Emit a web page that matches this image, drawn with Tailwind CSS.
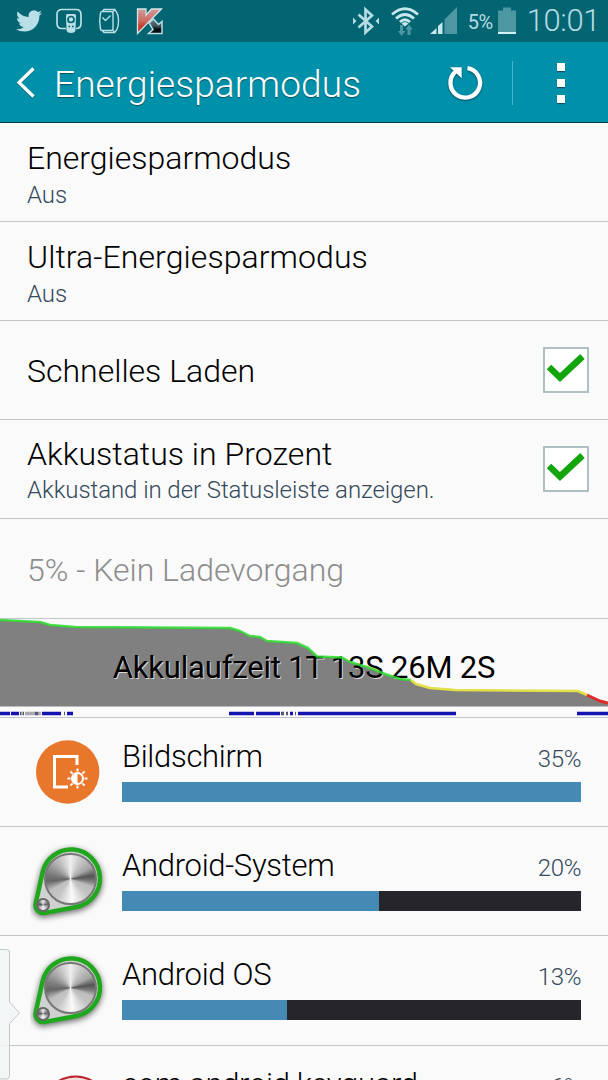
<!DOCTYPE html>
<html lang="de">
<head>
  <meta charset="UTF-8" />
  <title>Energiesparmodus</title>
  <script src="https://cdn.jsdelivr.net/npm/@tailwindcss/browser@4"></script>
</head>
<body class="bg-[#fafafa] font-[Roboto,sans-serif] font-light text-black">
  <div class="relative w-[608px] h-[1080px] overflow-hidden">

    <!-- Status bar -->
    <div class="h-[42px] bg-[#036472] flex items-center justify-between pl-4 pr-[8px] text-[#b5dce2]">
      <div class="flex items-center">
        <svg class="w-[26px] h-[26px]" viewBox="0 0 24 24" fill="#b9e0e6">
          <path d="M23.953 4.57a10 10 0 01-2.825.775 4.958 4.958 0 002.163-2.723c-.951.555-2.005.959-3.127 1.184a4.92 4.92 0 00-8.384 4.482C7.69 8.095 4.067 6.13 1.64 3.162a4.822 4.822 0 00-.666 2.475c0 1.71.87 3.213 2.188 4.096a4.904 4.904 0 01-2.228-.616v.06a4.923 4.923 0 003.946 4.827 4.996 4.996 0 01-2.212.085 4.936 4.936 0 004.604 3.417 9.867 9.867 0 01-6.102 2.105c-.39 0-.779-.023-1.17-.067a13.995 13.995 0 007.557 2.209c9.053 0 13.998-7.496 13.998-13.985 0-.21 0-.42-.015-.63A9.935 9.935 0 0024 4.59z" />
        </svg>
        <svg class="w-[26px] h-[26px] ml-[14px]" viewBox="0 0 26 26" fill="none">
          <path d="M10 20.5H6Q1 20.5 1 15.5V6.500Q1 1.500 6 1.500H20Q25 1.500 25 6.500V15.500Q25 20.500 20 20.500" stroke="#b9e0e6" stroke-width="1.700" />
          <path d="M11.500 6h7q1.500 0 1.500 1.500L19.500 22q-.2 3-4.500 3t-4.500-3L10 7.500Q10 6 11.500 6z" fill="#b9e0e6" />
          <circle cx="15" cy="11.500" r="3" stroke="#036472" stroke-width="1.700" />
          <path d="M12.500 18.500h1.700M16 18.500H17.700" stroke="#036472" stroke-width="1.700" />
        </svg>
        <svg class="w-[22px] h-[26px] ml-[16px]" viewBox="0 0 22 26" fill="none" stroke="#b9e0e6" stroke-width="1.400">
          <path d="M4 3.500H13Q15 3.500 15 5.500V20.500Q15 22.500 13 22.500H4Q2.800 22.500 2.400 20.500Q1 13 2.400 5.500Q2.800 3.500 4 3.500z" />
          <path d="M4.500 3.500L6 1.500H16.500L15 4M4.500 22.500L6 24.500H16.500L15 22M16.500 1.500Q20.500 5 20.500 13T16.500 24.500" />
          <path d="M4.500 9.500L7.500 12.500L12.500 7.500" />
        </svg>
        <svg class="w-[28px] h-[28px] ml-[16px]" viewBox="0 0 28 28">
          <defs>
            <linearGradient id="red" x1="0" y1="0" x2="0" y2="1"><stop offset="0" stop-color="#cf9a97" /><stop offset=".5" stop-color="#cc6a60" /><stop offset=".7" stop-color="#c43a28" /></linearGradient>
            <linearGradient id="dark" x1="0" y1="0" x2="0" y2="1"><stop offset="0" stop-color="#67868c" /><stop offset=".5" stop-color="#405058" /><stop offset=".7" stop-color="#050d12" /></linearGradient>
          </defs>
          <path d="M1.500 2H10V8L15.500 2H25.500L1.500 26.500z" fill="url(#red)" stroke="#d4e6e6" stroke-width="1.300" />
          <path d="M13 16L17.500 12L22.500 17.500L26 14.500V26.500H12.500L17 22.500z" fill="url(#dark)" stroke="#b9dce0" stroke-width="1.500" />
        </svg>
      </div>

      <div class="flex items-center">
        <svg class="w-[28px] h-[30px]" viewBox="0 0 28 30" fill="none" stroke="#b5dce2" stroke-width="2.700">
          <path d="M6.500 8.500L20 20.500L13.500 26.500V3.500L20 9.500L6.500 21.500" />
          <path d="M1 11.500L4.500 15L1 18.500zM27 11.500L23.500 15L27 18.500z" fill="#b5dce2" stroke="none" />
        </svg>
        <svg class="w-[30px] h-[30px] ml-[10px]" viewBox="0 0 30 30" fill="none">
          <path d="M2 8.500Q15-3 28 8.500M6 12.500Q15 4.500 24 12.500M10 16Q15 11.500 20 16" stroke="#c5e8ec" stroke-width="2.700" />
          <path d="M11.500 17.500Q15 14.500 18.500 17.500L15 20.500z" fill="#c5e8ec" />
          <path d="M10 19h3v6h2.500L11.500 30L8 25h2zM17.500 29h3v-5.500h2.300L19 18.500L15.500 23.500h2z" fill="#4d97a3" />
        </svg>
        <svg class="w-[28px] h-[28px] ml-[10px]" viewBox="0 0 28 28">
          <path d="M0 27L6.500 21V27zM8 27V19L12.500 15V27z" fill="#c5e8ec" />
          <path d="M14.500 27V12.500L27 0V27z" fill="#4d97a3" />
        </svg>
        <span class="ml-[10px] mt-[2px] text-[20px] leading-[24px] font-normal tracking-[-0.5px]">5%</span>
        <svg class="w-[20px] h-[28px] ml-[4px]" viewBox="0 0 20 28">
          <path d="M1 3.500H6V.5H14V3.500H19V26H1z" fill="#4d97a3" />
          <path d="M1 26H19" stroke="#d5f0f3" stroke-width="2" />
        </svg>
        <span class="ml-[10px] text-[31px] leading-[42px] tracking-[-0.4px]">10:01</span>
      </div>
    </div>

    <!-- Action bar -->
    <div class="h-[81px] bg-[#0091aa] border-b border-[#083d48] flex items-center pl-4 pt-[2px] text-white">
      <svg class="w-[20px] h-[34px]" viewBox="0 0 20 34" fill="none" stroke-width="3.300">
        <path d="M17.500 3.500L3 17.500L17.500 31.500" stroke="#046879" />
        <path d="M17.500 2.500L3 16.500L17.500 30.500" stroke="#fff" />
      </svg>
      <h1 class="ml-[18px] mt-[3px] flex-1 text-[37px] leading-[44px] tracking-[0.1px] [text-shadow:0_1px_1px_#045260]">Energiesparmodus</h1>
      <svg class="w-[40px] h-[40px] drop-shadow-[0_1px_1px_#045260]" viewBox="0 0 40 40" fill="none">
        <path d="M22.500 5.200A14.800 14.800 0 1 1 10.500 8.700" stroke="#fff" stroke-width="4.300" />
        <path d="M5 4.300H16.700V15.300z" fill="#fff" />
      </svg>
      <div class="ml-[27px] w-px h-[44px] bg-[#4db4c6]"></div>
      <div class="ml-[44px] mr-[43px] flex flex-col gap-2">
        <div class="w-2 h-2 bg-white shadow-[0_1px_1px_#045260]"></div>
        <div class="w-2 h-2 bg-white shadow-[0_1px_1px_#045260]"></div>
        <div class="w-2 h-2 bg-white shadow-[0_1px_1px_#045260]"></div>
      </div>
    </div>

    <!-- Settings -->
    <div class="h-[99px] border-b border-[#c0c5ca] px-[27px] pt-[15px]">
      <h2 class="text-[32px] leading-[40px]">Energiesparmodus</h2>
      <p class="pt-px text-[24px] leading-[32px] tracking-[-0.07px] text-[#34495a]">Aus</p>
    </div>
    <div class="h-[99px] border-b border-[#c0c5ca] px-[27px] pt-[15px]">
      <h2 class="text-[32px] leading-[40px] tracking-[0.08px]">Ultra-Energiesparmodus</h2>
      <p class="pt-px text-[24px] leading-[32px] tracking-[-0.07px] text-[#34495a]">Aus</p>
    </div>
    <div class="h-[99px] border-b border-[#c0c5ca] pl-[27px] pr-[19px] flex items-center justify-between">
      <h2 class="pt-[2px] text-[32px] leading-[40px]">Schnelles Laden</h2>
      <div class="w-[46px] h-[46px] bg-white border-2 border-[#b0bfc2]">
        <svg class="w-[42px] h-[42px]" viewBox="0 0 42 42" fill="none">
          <path d="M4 18L15 28.500L37.500 7.500" stroke="#12a50c" stroke-width="6.500" />
        </svg>
      </div>
    </div>
    <div class="h-[99px] border-b border-[#c0c5ca] pl-[27px] pr-[19px] flex items-center justify-between">
      <div class="pt-[3px]">
        <h2 class="text-[32px] leading-[40px] tracking-[0.03px]">Akkustatus in Prozent</h2>
        <p class="text-[24px] leading-[33px] tracking-[-0.07px] text-[#34495a]">Akkustand in der Statusleiste anzeigen.</p>
      </div>
      <div class="w-[46px] h-[46px] bg-white border-2 border-[#b0bfc2]">
        <svg class="w-[42px] h-[42px]" viewBox="0 0 42 42" fill="none">
          <path d="M4 18L15 28.500L37.500 7.500" stroke="#12a50c" stroke-width="6.500" />
        </svg>
      </div>
    </div>
    <div class="h-[100px] border-b border-[#c0c5ca] px-[27px] pt-[2px] flex items-center">
      <h2 class="text-[32px] leading-[40px] text-[#8d8d8d]">5% - Kein Ladevorgang</h2>
    </div>

    <!-- Battery history -->
    <div class="h-[99px] border-b border-[#c0c5ca] grid">
      <svg class="w-[608px] h-[98px] col-start-1 row-start-1" viewBox="0 619 608 98" fill="none">
        <path d="M0 620L20 621L40 622L50 625L75 627L230 628L240 631L250 636L260 637L267 641L297 643L308 648L317 656.500L342 657.500L350 662L370 668L385 674L400 679L411 680L416 684L430 688L455 690L578 691L587 695L600 701L608 703V706.500H0z" fill="#808080" />
        <path d="M0 713.500H10M11 713.500H19M42 713.500H61M67 713.500H73M229 713.500H254M256 713.500H280M290 713.500H293M298 713.500H456M577 713.500H608" stroke="#1212ae" stroke-width="3.500" />
        <path d="M20 713.500H21.500M22.500 713.500H24M35 713.500H38M64 713.500H65M281 713.500H284M286 713.500H288M295 713.500H296" stroke="#55556c" stroke-width="3.500" />
        <path d="M25 713.500H35M38 713.500H41" stroke="#a9a9b4" stroke-width="3.500" />
      </svg>
      <p class="col-start-1 row-start-1 pt-[29px] text-center text-[31px] leading-[40px] font-normal tracking-[-0.18px] [text-shadow:1px_1px_0_#ffffffb0]">Akkulaufzeit 1T 13S 26M 2S</p>
      <svg class="w-[608px] h-[98px] col-start-1 row-start-1 z-10" viewBox="0 619 608 98" fill="none" stroke-width="2.500" stroke-linejoin="round">
        <path d="M0 620L20 621L40 622L50 625L75 627L230 628L240 631L250 636L260 637L267 641L297 643L308 648L317 656.500L342 657.500L350 662L370 668L385 674L400 679L411 680" stroke="#2fdc2f" stroke-opacity=".85" />
        <path d="M411 680L416 684L430 688L455 690L578 691L587 695" stroke="#e3e048" />
        <path d="M587 695L600 701L608 703" stroke="#e02c28" stroke-width="3" />
      </svg>
    </div>

    <!-- Consumers -->
    <ul id="apps"></ul>

    <!-- Edge panel handle -->
    <svg class="absolute left-0 top-[947px] w-[22px] h-[133px]" viewBox="0 947 22 133">
      <path d="M-2 949.500H6.500Q9.500 949.500 9.500 952.500V1002L19.500 1013L9.500 1023.500V1076Q9.500 1079 6.500 1079H-2z" fill="#f1f4f4" fill-opacity=".85" stroke="#c3c7c8" />
    </svg>
  </div>

  <script>
    const screenIcon = `
      <svg class="w-[80px] h-[84px]" viewBox="0 0 80 84" fill="none">
        <circle cx="37.700" cy="41" r="31.700" fill="#e8762b" />
        <path d="M47 34V25.500H24.500V56H38" stroke="#fff" stroke-width="3" />
        <g stroke="#fff" stroke-width="2">
          <circle cx="47.500" cy="47.500" r="5.500" />
          <path d="M47.500 37.500v3M47.500 54.500v3M37.500 47.500h3M54.500 47.500h3M40.400 40.400l2.200 2.200M52.400 52.400l2.200 2.200M40.400 54.600l2.200-2.200M52.400 42.600l2.200-2.200" />
        </g>
        <path d="M47.500 42A5.500 5.500 0 0 0 47.500 53z" fill="#fff" />
      </svg>`;

    const beltIcon = `
      <div class="relative w-[80px] h-[84px]">
        <svg class="w-[80px] h-[84px]" viewBox="0 0 80 84">
          <path d="M5.700 63.250L12.700 32.100A29 29 0 1 1 46.300 67L15 72.900A8 8 0 0 1 5.700 63.250z" fill="#cfd2cf" stroke="#1fa81d" stroke-width="4.500" class="drop-shadow-[0_2px_3px_#0009]" />
        </svg>
        <div class="absolute left-[14px] top-[12.500px] w-[53px] h-[52px] rounded-full border-2 border-[#777] bg-[conic-gradient(#eee_0deg,#c5c5c5_30deg,#a5a5a5_60deg,#555_82deg,#777_95deg,#bbb_110deg,#c5c5c5_135deg,#fafafa_175deg,#c5c5c5_215deg,#c0c0c0_240deg,#666_264deg,#777_280deg,#a5a5a5_310deg,#eee_360deg)]"></div>
        <div class="absolute left-[6px] top-[57.500px] w-[14px] h-[14px] rounded-full border-2 border-[#666] bg-[conic-gradient(#eee,#666_80deg,#bbb_120deg,#f5f5f5_180deg,#aaa_240deg,#555_280deg,#eee)]"></div>
      </div>`;

    const guardIcon = `
      <svg class="w-[80px] h-[84px]" viewBox="0 0 80 84">
        <circle cx="45.500" cy="50.500" r="33" fill="#f3dede" stroke="#b8232c" stroke-width="2" />
      </svg>`;

    const apps = [
      { name: "Bildschirm", percent: "35%", width: 459, icon: screenIcon },
      { name: "Android-System", percent: "20%", width: 257, icon: beltIcon },
      { name: "Android OS", percent: "13%", width: 165, icon: beltIcon },
      { name: "com.android.keyguard", percent: "6%", width: 79, icon: guardIcon },
    ];

    const list = document.getElementById("apps");
    apps.forEach((app) => {
      const li = document.createElement("li");
      li.className = "h-[109.200px] border-b border-[#c0c5ca] flex pl-[30px] pr-[27px]";
      li.innerHTML = `
        <div class="w-[92px] pt-[13px]">${app.icon}</div>
        <div class="flex-1 pt-[19px]">
          <div class="h-[45px] flex justify-between">
            <h2 class="text-[31px] leading-[40px] tracking-[-0.3px]">${app.name}</h2>
            <span class="pt-[2px] text-[24px] leading-[40px] tracking-[-0.4px] text-[#34495a]">${app.percent}</span>
          </div>
          <div class="h-[20px] bg-[#25252b]">
            <div class="h-full bg-[#448ab4]" style="width: ${app.width}px"></div>
          </div>
        </div>`;
      list.appendChild(li);
    });
  </script>
</body>
</html>
